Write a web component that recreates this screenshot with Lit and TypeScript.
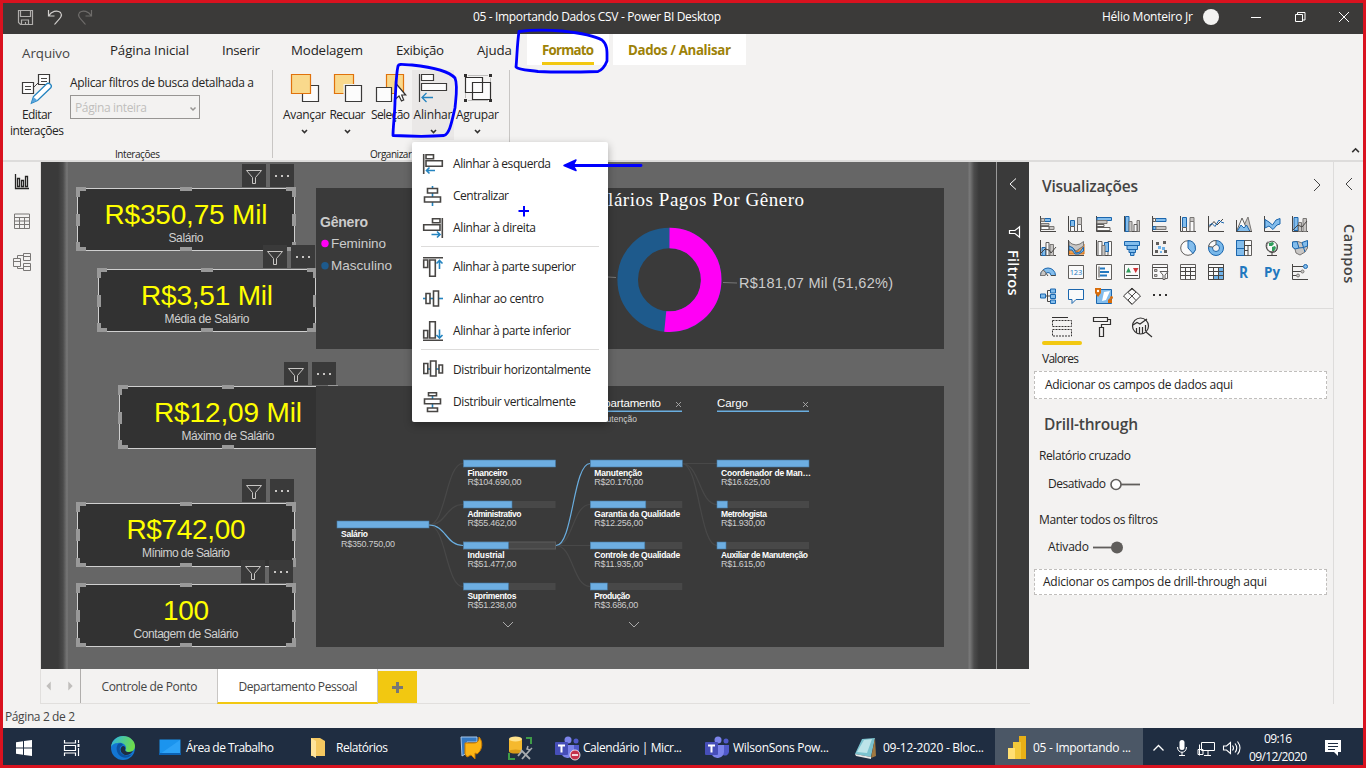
import { LitElement, html, svg, css, TemplateResult } from "lit";
import { customElement } from "lit/decorators.js";

interface Card { x: number; y: number; value: string; vw: number; label: string; lw: number; toolX: number; }
interface Node { x: number; y: number; fill: number; name: string; nw: number; value: string; w: number; active?: boolean; }

const cards: Card[] = [
  { x: 77, y: 188, value: "R$350,75 Mil", vw: 163, label: "Salário", lw: 35, toolX: 242 },
  { x: 98, y: 269, value: "R$3,51 Mil", vw: 132, label: "Média de Salário", lw: 85, toolX: 263 },
  { x: 119, y: 386, value: "R$12,09 Mil", vw: 148, label: "Máximo de Salário", lw: 93, toolX: 284 },
  { x: 77, y: 503, value: "R$742,00", vw: 119, label: "Mínimo de Salário", lw: 88, toolX: 242 },
  { x: 77, y: 584, value: "100", vw: 46, label: "Contagem de Salário", lw: 105, toolX: 241 },
];

const nodes: Node[] = [
  { x: 337, y: 521, fill: 92, name: "Salário", nw: 27, value: "R$350.750,00", w: 54 },
  { x: 463.5, y: 460, fill: 92, name: "Financeiro", nw: 40, value: "R$104.690,00", w: 54 },
  { x: 463.5, y: 501, fill: 48.5, name: "Administrativo", nw: 54, value: "R$55.462,00", w: 49 },
  { x: 463.5, y: 542, fill: 45, name: "Industrial", nw: 37, value: "R$51.477,00", w: 49, active: true },
  { x: 463.5, y: 583, fill: 45, name: "Suprimentos", nw: 49, value: "R$51.238,00", w: 49 },
  { x: 590.3, y: 460, fill: 92, name: "Manutenção", nw: 48, value: "R$20.170,00", w: 49 },
  { x: 590.3, y: 501, fill: 55.5, name: "Garantia da Qualidade", nw: 86, value: "R$12.256,00", w: 49 },
  { x: 590.3, y: 542, fill: 54.5, name: "Controle de Qualidade", nw: 86, value: "R$11.935,00", w: 49 },
  { x: 590.3, y: 583, fill: 17, name: "Produção", nw: 36, value: "R$3.686,00", w: 44 },
  { x: 717, y: 460, fill: 92, name: "Coordenador de Man…", nw: 90, value: "R$16.625,00", w: 49 },
  { x: 717, y: 501, fill: 10.5, name: "Metrologista", nw: 46, value: "R$1.930,00", w: 44 },
  { x: 717, y: 542, fill: 9, name: "Auxiliar de Manutenção", nw: 87, value: "R$1.615,00", w: 44 },
];

const axis = svg`<path class="d" d="M.5 0V15.5H16"/>`;
const vizIcons = [
  svg`${axis}<path class="b" d="M4.5 2.5h6v3h-6z"/><path class="g" d="M1 2.5h3.5v3H1zM1 7.5h8v2H1zM9 10.5h5v3H9z"/><path class="w" d="M1 10.5h8v3H1z"/>`,
  svg`${axis}<path class="b" d="M2.500 4.500h4v6h-4z"/><path class="w" d="M2.500 10.500h4v5h-4zM9.500 8.500h4v7h-4z"/><path class="g" d="M9.500 1.500h4v7h-4z"/>`,
  svg`${axis}<path class="b" d="M1 1.500h14.500v3H1z"/><path class="g" d="M1 4.500h10v3H1z"/><path class="w" d="M1 8.500h7v2H1zM1 11.500h13v3H1z"/>`,
  svg`${axis}<path class="b" d="M1.500 .5h3.500v15H1.500z"/><path class="g" d="M5 5.500h3v10H5zM13 4.500h2.500v11H13z"/><path class="w" d="M10 8.500h3v7h-3z"/>`,
  svg`${axis}<path class="b" d="M3.500 2.500h10.500v3H3.500zM1 10.500h3v3H1z"/><path class="g" d="M4 10.500h10v3H4z"/><path class="w" d="M1 2.500h2.500v3H1z"/>`,
  svg`${axis}<path class="b" d="M2.500 1.500h4v10h-4z"/><path class="w" d="M2.500 11.500h4v4h-4zM10 5.500h4v10h-4z"/><path class="g" d="M10 1.500h4v4h-4z"/>`,
  svg`${axis}<path class="d" d="M1 11.500 6 5.500 9 9l6-6"/><path class="l" d="M1 9.500l3-2 3 3L11 4l2 2 3 1"/>`,
  svg`<path class="g" d="M5 15.500 12 1l3.500 14.500z"/><path class="w" d="M.5 15.500 6 2l6 13.500z"/><path class="b" d="M1 15.500 5 9l3 3 2.500-3 3.500 6.500z"/><path class="d" d="M.5 4v11.500H16"/>`,
  svg`${axis}<path class="b" d="M1 3.500 5 6l3.500 3L12 4l4-1.500V8l-3 1-4 4.500L5 10l-4 2z"/>`,
  svg`${axis}<path class="b" d="M2 1.500h4v13H2z"/><path class="g" d="M6.500 6.500h3v9h-3zM11 2.500h3.500v13H11z"/><path class="d" d="M1 14l5-5 4 2 5-6"/>`,
  svg`${axis}<path class="b" d="M2 7.500h3.500v8H2z"/><path class="w" d="M6 2.500h3v13H6z"/><path class="g" d="M10 4.500h3.500v11H10z"/><path class="d" d="M1 13l4-4 4 1 2 3 5-6"/>`,
  svg`<path class="o" d="M1 9h4l4 3 3-5 4-3v10H1z"/><path class="g" d="M1 1.500 4 4l4 1 4-1 3.500-2.500V6L11 9 8 11 5 8 1 6z"/><path class="b" d="M1 6l4 2 3 5 4-1 3.500-5v4L11 14H7L4 10H1z"/>${axis}`,
  svg`${axis}<path class="w" d="M2 1.500h4v14H2zM12 1.500h3.500v14H12z"/><path class="b" d="M8.500 2.500h4v9h-4z"/><path class="g" d="M6 5.500h3v10H6z"/>`,
  svg`<path class="b" d="M.5 1.500h15v4H.5zM3 5.500h10.500v4H3zM5 9.500h6.500v3H5zM6.500 12.500H10v3H6.500z"/>`,
  svg`${axis}<path fill="#605e5c" d="M4 2h3v3H4zM11 1h3v3h-3zM3 10h3v3H3zM12 10h3v3h-3z"/><path fill="#6fb2e8" d="M6 6h3v3H6zM10 7h3v3h-3zM8 11h2v2H8z"/>`,
  svg`<circle cx="8" cy="8" r="7.300" class="w"/><path class="b" d="M8 .7A7.300 7.300 0 0 1 13 13.500L8 8z"/>`,
  svg`<circle cx="8" cy="8" r="5.500" fill="none" stroke="#78b8ea" stroke-width="4"/><circle cx="8" cy="8" r="7.500" class="l"/><circle cx="8" cy="8" r="3.500" class="l"/><path d="M.5 6.500 4.500 7 8 4.500V.5A8 8 0 0 0 .5 6.500z" class="w"/>`,
  svg`<path class="w" d="M.5.5h15v15H.5z"/><path class="b" d="M.5.5h8v8h-8zM.5 8.500h8v7h-8z"/><path class="d" d="M8.500.5v15M8.500 5.500h7M12 5.500v10M8.500 10.500H12"/>`,
  svg`<circle cx="8" cy="6.500" r="5.300" class="w"/><path fill="#2f9e5b" d="M5 3l4-1 1 2-2 2H5zM8 7l3-1 1 2-2 3H8z"/><path class="d" d="M4 1.500C0 5 3 12.500 8 12.500s6-4 5-8M8 12.500v2.500M3 15.500h10"/>`,
  svg`<path class="g" d="M.5 2 6 1.500l4 1.500 5.500-2V8L13 12l-5 3-4-2-1-4-2.500-2z"/><path class="b" d="M.5 2 5 1.500 7 8 3 9 .5 7zM10 2.500l5.500-2V6l-4 1.500z"/><path class="l" d="M7 8l4.500-.5L13 12"/>`,
  svg`<path class="b" d="M.5 11.500a7.500 7.500 0 0 1 15 0h-4.500a3 3 0 0 0-6 0z"/><path class="d" d="M8 12 4 6.500M.5 11.500H5M11 11.500h4.500"/><path class="g" d="M.5 11.500A8 8 0 0 1 3 6l3 3-1 2.500z"/>`,
  svg`<path class="w" d="M.5 1.500h15v13H.5z"/><text x="1.700" y="11" font-size="7.500" fill="#2278bf" textLength="12.500">123</text>`,
  svg`<path class="w" d="M.5.5h15v15H.5z"/><path stroke="#2278bf" stroke-width="2" d="M4 4.500h5M4 8h9M4 11.500h7"/><path class="d" d="M3 2.500v11"/>`,
  svg`<path class="w" d="M.5.500h15v14H.5z"/><path fill="#2f9e5b" d="M2 8.500l2.500-5 2.500 5z"/><path fill="#d13438" d="M9 4h5.500l-2.800 5z"/><path class="d" d="M2 11.500h12"/>`,
  svg`<path class="w" d="M.5.500h15v14H.5z"/><path class="d" d="M.5 3.500h15"/><path class="g" d="M2.500 5.500h2.500v2H2.500zM2.500 10.500h2.500v2H2.500z"/><path class="w" d="M8 7.500h8l-3 3.500v4.500h-2V11z"/>`,
  svg`<path class="w" d="M.5.500h15v15H.5z"/><path class="d" d="M.5 3.500h15M.5 7.500h15M.5 11.500h15M5.500 3.500v12M10.500 3.500v12"/>`,
  svg`<path class="w" d="M.5.500h15v15H.5z"/><path fill="#6fb2e8" d="M10 4h5.500v11.500H5V12h5z"/><path class="d" d="M.5.500h15v15H.5zM.5 3.500h15M.5 7.500h15M.5 11.500h15M5.500 3.500v12M10.500 3.500v12"/>`,
  svg`<text x="3" y="14" font-size="16" font-weight="700" fill="#2278bf" textLength="9" lengthAdjust="spacingAndGlyphs">R</text>`,
  svg`<text x="0" y="13" font-size="15" font-weight="700" fill="#2278bf" textLength="16" lengthAdjust="spacingAndGlyphs">Py</text>`,
  svg`${axis}<path class="d" d="M1 2.500h10M1 7.500h8M1 11.500h4"/><circle cx="13.500" cy="2.500" r="2" class="b"/><circle cx="10.500" cy="7.500" r="1.500" class="g"/><circle cx="6" cy="11.500" r="1.500" class="g"/>`,
  svg`<path class="d" d="M5 8h5.500M7.500 2.500h3M7.500 13.500h3M7.500 2.500v11"/><path class="b" d="M.5 6h5v4h-5zM10.500 1h5v4h-5zM10.500 6.500h5v4h-5zM10.500 12h5v3.500h-5z"/>`,
  svg`<path class="w blue" d="M.5 1.500h15v10H8l-4 4v-4H.5z"/>`,
  svg`<path class="b" d="M.5 1.500h15v14H.5z"/><path fill="#fff" d="M8 4l6-1-4 9-4 1z"/><path fill="#d86c0a" d="M-1 0h6v5L2 9-1 5zM12 12l2-2 2 2v3h-4z"/><circle cx="2" cy="3" r="1.200" fill="#fff"/><circle cx="15.500" cy="9.500" r="1.500" fill="#d86c0a"/>`,
  svg`<path class="w dark" d="M8 0 16.500 8 8 16.500-.5 8z"/><path class="d" d="M4 4.500 8 8l-4 4M8 8l4-4M8 8l4 4.500M4 4l5-3.500M8 1l4 3M4 12l4 4"/>`,
  svg`<path fill="#323130" d="M1 6h2v2H1zM7 6h2v2H7zM13 6h2v2h-2z"/>`,
];

// Align glyphs of the drop-down, drawn on a 20 by 20 grid.
const alignIcons = [
  svg`<path class="m" d="M.7 0v20M3 .7h7.500v4H3zM3 6.700h16.300v5.600H3z"/><path class="a" d="M4 16.500h8M6.500 13.500l-3 3 3 3"/>`,
  svg`<path class="a" d="M9.500 0v20"/><path class="mf" d="M4.500 2.500h10v4.500h-10zM1.500 11h16v5h-16z"/>`,
  svg`<path class="m" d="M19.300 0v20M9.500.7h7.500v4H9.500zM.7 6.700h16.300v5.600H.7z"/><path class="a" d="M8.500 16.500h8M14 13.500l3 3-3 3"/>`,
  svg`<path class="m" d="M0 .7h20M.7 3h4v7.500h-4zM6.700 3h5.600v16.300H6.700z"/><path class="a" d="M16.500 4v8M13.500 6.500l3-3 3 3"/>`,
  svg`<path class="a" d="M0 9.500h20"/><path class="mf" d="M3 4.500h4v10H3zM10.500 2h5v15h-5z"/>`,
  svg`<path class="m" d="M0 19.300h20M.7 9.500h4v7.500h-4zM6.700.7h5.600v16.300H6.700z"/><path class="a" d="M16.500 8.500v8M13.500 14l3 3 3-3"/>`,
  svg`<path class="a" d="M3 9h14"/><path class="mf" d="M.8 3.500h4v10h-4zM7.500 1h5.500v15H7.500zM16 5h3.500v8H16z"/>`,
  svg`<path class="a" d="M9.500 3v14"/><path class="mf" d="M5.500.8h8v3h-8zM1.500 7h16v4.800h-16zM4.500 16h10v3.500h-10z"/>`,
];

const ribbonButtons: { label: string; w: number; text: number; x: number; on?: boolean; arrow: boolean; icon: TemplateResult }[] = [
  { label: "Avançar", w: 43, text: 43, x: 283, arrow: true, icon: svg`<path class="k" d="M302.500 85.500h16v16h-16z"/><path class="or" d="M291.500 74.500h19v19h-19z"/>` },
  { label: "Recuar", w: 43, text: 36, x: 326, arrow: true, icon: svg`<path class="or" d="M334.500 74.500h19v19h-19z"/><path d="M343.500 84h11v11h-11z" fill="#f3f2f1"/><path class="k" d="M345.500 85.500h16v16h-16z"/>` },
  { label: "Seleção", w: 43, text: 39, x: 369, arrow: false, icon: svg`<path class="or" d="M386.500 74.500h17v19h-17z"/><path class="k" d="M376.500 87.500h15v14h-15z"/><path fill="#fff" stroke="#323130" stroke-width="1.200" d="M395.500 83v16l3.500-3 2.500 5 2.200-1-2-5h4z"/>` },
  { label: "Alinhar", w: 42, text: 39, x: 412, on: true, arrow: true, icon: svg`<path class="k" d="M419.500 74v28M421.500 74.500h12v6h-12zM421.500 83.500h25v7h-25z"/><path fill="none" stroke="#2484c0" stroke-width="1.300" d="M422 97.500h11M426.500 93l-4.500 4.500 4.500 4.500"/>` },
  { label: "Agrupar", w: 47, text: 43, x: 454, arrow: true, icon: svg`<path class="d" d="M468 75.500h20M468 100.500h20M465.500 78v20M490.500 78v20" stroke-opacity=".3"/><path fill="#fcfcfc" d="M466 78h17v15h-17zM472 82h18v18h-18z"/><path class="d dark" stroke-width="1.200" d="M465.500 77.500h17v15h-17zM472.500 82.500h18v17h-18z"/><path fill="#323130" d="M464 74h3v3h-3zM489 74h3v3h-3zM464 99h3v3h-3zM489 99h3v3h-3z"/>` },
];

@customElement("app-root")
export class AppRoot extends LitElement {
  static styles = css`
    :host { display: block; width: 1366px; height: 768px; overflow: hidden; font-family: "Open Sans", "Noto Sans", sans-serif; font-size: 12px; color: #252423; }
    * { box-sizing: border-box; }
    svg { display: block; flex: none; overflow: visible; }
    .frame { position: relative; display: flex; flex-direction: column; width: 1366px; height: 768px; border: 3px solid #d9121f; background: #f3f2f1; }
    .t { display: inline-block; white-space: nowrap; flex: none; line-height: 16px; }
    .titlebar { display: flex; align-items: center; height: 31px; background: #3b3a39; color: #fff; padding: 0 0 3px 15px; flex: none; }
    .titlebar .name { margin-left: 380px; }
    .titlebar .user { margin-left: 381px; }
    .titlebar .win { margin-left: 10px; }
    .ribbon { height: 128px; border-bottom: 2px solid #dddcdb; flex: none; display: flex; flex-direction: column; }
    .tabs { display: flex; height: 32px; font-size: 13.300px; flex: none; }
    .tab { padding-top: 8px; flex: none; display: flex; flex-direction: column; }
    .tab.file { padding: 11px 0 0 19px; color: #444; margin-right: 40px; }
    .tab.hot { height: 31px; background: #fff; color: #9d8208; font-weight: 700; padding-left: 15px; padding-right: 15px; }
    .tab .under { display: block; height: 3px; background: #f2c811; margin-top: 4px; }
    .groups { display: flex; flex: 1; }
    .group { display: flex; flex-direction: column; align-items: center; height: 94px; }
    .group .body { display: flex; height: 82px; flex: none; }
    .group .caption { font-size: 10px; line-height: 12px; }
    .g1 { width: 269px; }
    .g1 .body { align-self: flex-start; }
    .rule { width: 1px; background: #c8c6c4; margin: 4px 0 2px; }
    .edit { width: 68px; display: flex; flex-direction: column; align-items: center; padding-top: 8px; margin-right: -1px; }
    .edit svg { margin-bottom: 3px; }
    .drill { padding-top: 9px; display: flex; flex-direction: column; gap: 4px; }
    .select { width: 130px; height: 24px; border: 1px solid #979593; display: flex; align-items: center; justify-content: space-between; padding: 1px 2px 0 4px; color: #c0bebc; }
    .g2 { width: 236px; }
    .g2 .body { align-self: flex-start; padding: 4px 0 0 10px; }
    .rbtn { display: flex; flex-direction: column; align-items: center; padding-top: 4px; height: 70px; }
    .rbtn svg { margin-bottom: 3px; }
    .rbtn.on { background: #eae8e7; }
    .collapse { margin-left: auto; align-self: flex-end; padding: 0 2px 0 0; margin-bottom: 3px; }
    .main { display: flex; height: 542px; flex: none; }
    .rail { width: 38px; border-right: 1px solid #e1dfdd; display: flex; flex-direction: column; align-items: center; padding-top: 12px; gap: 23px; }
    .work { width: 989px; display: flex; flex-direction: column; }
    .top { display: flex; height: 507px; }
    .canvas { position: relative; width: 955px; height: 507px; overflow: hidden; background: linear-gradient(90deg, #3a3a3a 0, #3a3a3a 17px, #4a4a4a 22px, #777 26px, #666 27.500px, #666 927px, #777 928px, #777 929px, #4c4c4c 933px, #3a3a3a 938px); }
    .card { position: absolute; width: 218px; height: 64px; background: #323232; border: 1px solid #d0d0d0; display: flex; flex-direction: column; align-items: center; padding-top: 10px; font-family: "Liberation Sans", sans-serif; }
    .card .value { font-size: 28px; line-height: 32px; color: #ff0; }
    .card .label { font-size: 12px; line-height: 15px; color: #d0d0d0; }
    .card svg, .tools, .panel, .menu, .marks { position: absolute; }
    .card svg { left: -2px; top: -2px; }
    .tools { display: flex; gap: 4px; }
    .tools svg { background: #3a3a3a; }
    .panel { background: #3a3a3a; font-family: "Liberation Sans", sans-serif; }
    .filters { width: 33px; background: #3a3a3a; border-left: 1px solid #999; color: #fff; display: flex; flex-direction: column; align-items: center; padding-top: 16px; }
    .filters .funnel { margin: 36px 0 0 3px; }
    .filters .vert { margin-top: 12px; font-size: 14.500px; font-weight: 600; letter-spacing: .3px; }
    .vert { writing-mode: vertical-rl; line-height: 18px; white-space: nowrap; }
    .pages { display: flex; height: 35px; width: 989px; color: #444; padding-left: 0; border-bottom: 1px solid #e1dfdd; }
    .arrows { width: 40px; border-right: 1px solid #b0aeac; }
    .page { height: 35px; display: flex; align-items: center; justify-content: center; width: 136px; padding-left: 1px; }
    .page.on { width: 161px; background: #fff; border-left: 1px solid #c8c6c4; border-right: 1px solid #c8c6c4; border-bottom: 2px solid #f2c811; padding-top: 2px; }
    .add { width: 39px; height: 32px; margin-top: 2px; background: #f2c811; }
    .viz { width: 303px; background: #f3f2f1; display: flex; flex-direction: column; }
    .head { display: flex; justify-content: space-between; padding: 14px 11px 0 12px; font-size: 15.500px; font-weight: 600; color: #444; height: 54px; align-items: flex-start; }
    .head .t { line-height: 21px; }
    .grid { display: grid; grid-template-columns: repeat(10, 16px); column-gap: 12px; row-gap: 8px; padding-left: 10px; height: 93px; border-bottom: 1px solid #dddcdb; align-content: start; }
    .modes { display: flex; padding: 7px 0 0 12px; height: 31px; gap: 10px; }
    .bar { width: 40px; height: 4px; border-radius: 2px; background: #f2c811; margin: 1px 0 0 12px; }
    .field { margin: 5px 0 0 12px; height: 16px; }
    .drop { margin: 5px 6px 0 4px; height: 28px; background: #fff; border: 1px dashed #c0bebc; display: flex; align-items: center; padding-left: 10px; }
    .sect { margin: 14px 0 0 14px; font-size: 15.500px; font-weight: 600; color: #444; height: 21px; }
    .sect .t { line-height: 21px; }
    .sub { margin: 13px 0 0 9px; height: 16px; }
    .toggle { display: flex; align-items: center; gap: 4px; margin: 13px 0 0 18px; height: 16px; }
    .toggle.later { margin-top: 12px; }
    .sub.second { margin-top: 19px; }
    .drop.small { height: 26px; margin-top: 14px; padding-left: 8px; }
    .fields { width: 30px; border-left: 1px solid #dddcdb; display: flex; flex-direction: column; align-items: center; padding-top: 16px; color: #333; }
    .fields .vert { margin: 34px 0 0 1px; font-size: 14.500px; font-weight: 600; color: #444; letter-spacing: .6px; }
    .status { height: 24px; flex: none; padding: 4px 0 0 2px; color: #444; }
    .taskbar { height: 37px; flex: none; background: #1f2d41; color: #fff; display: flex; align-items: center; padding: 2px 0 0 13px; }
    .task { display: flex; align-items: center; gap: 5px; flex: none; }
    .task.on { height: 37px; width: 148px; margin: -2px 0 0 11px; padding: 2px 0 0 13px; background: #4b5766; gap: 7px; }
    .clock { display: flex; flex-direction: column; align-items: center; width: 60px; margin-left: 7px; }
    .clock .t { line-height: 18px; }
    .menu { left: 409px; top: 139px; width: 196px; height: 280px; background: #fff; border-radius: 2px; box-shadow: 0 3px 8px rgba(0,0,0,.3); padding-top: 6px; }
    .item { height: 32px; display: flex; align-items: center; padding-left: 11px; gap: 10px; }
    .sep { height: 1px; background: #dddcdb; margin: 2px 9px 4px; }
    .marks { left: -3px; top: -3px; pointer-events: none; }
    .d { fill: none; stroke: #484644; }
    .w { fill: #fafafa; stroke: #605e5c; }
    .w.blue { stroke: #1b66ad; }
    .dark { stroke: #323130; }
    .g { fill: #c8c6c4; stroke: #797775; }
    .b { fill: #83bdec; stroke: #1b66ad; }
    .o { fill: #f0a050; stroke: #d86c0a; }
    .l { fill: none; stroke: #1b66ad; }
    .k { fill: #fcfcfc; stroke: #3b3a39; stroke-width: 1.200; }
    .or { fill: #f9d98c; stroke: #e0720c; stroke-width: 1.200; }
    .m { fill: none; stroke: #484644; stroke-width: 1.600; }
    .mf { fill: #fff; stroke: #484644; stroke-width: 1.600; }
    .a { fill: none; stroke: #2484c0; stroke-width: 1.600; }
    .z { fill: none; stroke: #c8c6c4; }
  `;

  // Spread each measured label over the width that its slot reserves.
  protected firstUpdated() {
    this.renderRoot.querySelectorAll<HTMLElement>(".t").forEach((el) => {
      const range = document.createRange();
      range.selectNodeContents(el);
      const natural = range.getBoundingClientRect().width;
      const count = (el.textContent ?? "").length;
      if (count > 1) el.style.letterSpacing = `${(parseFloat(el.style.width) - natural) / (count - 1)}px`;
    });
  }

  private t(text: string, width: number, cls = "") {
    return html`<span class="t ${cls}" style="width:${width}px">${text}</span>`;
  }

  private card(c: Card) {
    const h = c.y === 503 ? 64 : 63;
    return html`
      <div class="card" style="left:${c.x - 41}px;top:${c.y - 162}px;height:${h}px">
        ${this.t(c.value, c.vw, "value")}${this.t(c.label, c.lw, "label")}
        <svg width="220" height="66"><path fill="#999" d="M0 0h10v4H4v6H0zM210 0h10v10h-4V4h-6zM0 ${h + 1}v-9h4v5h6v4zM220 ${h + 1}v-9h-4v5h-6v4zM104 0h12v4h-12zM104 ${h - 3}h12v4h-12zM0 27h4v12H0zM216 27h4v12h-4z"/></svg>
      </div>
      <div class="tools" style="left:${c.toolX - 41}px;top:${c.y - 186}px">
        <svg width="24" height="23"><path class="z" d="M4.500 6.500h15l-6 7v6h-3v-6z"/></svg>
        <svg width="24" height="23"><path fill="#c8c6c4" d="M5 11h2v2H5zM11 11h2v2h-2zM17 11h2v2h-2z"/></svg>
      </div>`;
  }

  private tree() {
    const link = (x1: number, y1: number, x2: number, y2: number, on = false) => {
      const m = (x1 + x2) / 2;
      return svg`<path d="M${x1} ${y1}C${m} ${y1} ${m} ${y2} ${x2} ${y2}" fill="none" stroke="${on ? "#6aaee0" : "#484848"}" stroke-width="1.200"/>`;
    };
    return html`<svg width="628" height="261" viewBox="316 386 628 261">
      ${[463.5, 504.5, 586.5].map((y) => link(429, 525, 463, y))}
      ${[504.5, 545.5, 586.5].map((y) => link(556, 545.5, 590, y))}
      ${[463.5, 504.5, 545.5].map((y) => link(682, 463.5, 717, y))}
      ${link(429, 525, 463, 545.5, true)}${link(556, 545.5, 590, 463.5, true)}
      ${nodes.map((n) => svg`
        <rect x="${n.x}" y="${n.y}" width="92" height="7" fill="#484848" stroke="${n.active ? "#5c5c5c" : "none"}"/>
        <rect x="${n.x}" y="${n.y}" width="${n.fill}" height="7" fill="#6daee2" stroke="#467ba5" stroke-width=".6"/>
        <text x="${n.x + 4}" y="${n.y + (n.x === 337 ? 16 : 15.5)}" font-size="8.500" font-weight="700" fill="#fff" textLength="${n.nw}">${n.name}</text>
        <text x="${n.x + 4}" y="${n.y + (n.x === 337 ? 26 : 25)}" font-size="9" fill="#ccc" textLength="${n.w}">${n.value}</text>`)}
      <text x="590" y="407" font-size="11.500" fill="#fff" textLength="71">Departamento</text>
      <text x="717" y="407" font-size="11.500" fill="#fff" textLength="31">Cargo</text>
      <text x="590" y="422" font-size="8.500" fill="#d0d0d0" textLength="47">Manutenção</text>
      <path stroke="#6aaee0" stroke-width="1.500" d="M590 411.300h92M717 411.300h92"/>
      <path fill="none" stroke="#aaa" stroke-width=".9" d="M676 402l5 5M681 402l-5 5M803 402l5 5M808 402l-5 5"/>
      <path fill="none" stroke="#aaa" d="M503 622l5 5 5-5M629 622l5 5 5-5"/>
    </svg>`;
  }

  private donut() {
    return html`<svg width="628" height="161" viewBox="316 188 628 161">
      <text x="320" y="227" font-size="14" font-weight="700" fill="#ccc" textLength="48">Gênero</text>
      <circle cx="325" cy="243.500" r="3.700" fill="#ff00f5"/><circle cx="325" cy="265.800" r="3.700" fill="#1e5a8c"/>
      <text x="331" y="248" font-size="13.500" fill="#ccc" textLength="55">Feminino</text>
      <text x="331" y="270" font-size="13.500" fill="#ccc" textLength="61">Masculino</text>
      <text x="588" y="206" font-family="Liberation Serif, serif" font-size="19" fill="#fff" textLength="216">Salários Pagos Por Gênero</text>
      <path d="M608 277l8 .5M723 282.500l14 .5" stroke="#777" fill="none"/>
      <circle cx="669.500" cy="279.800" r="41.800" fill="none" stroke="#1e5a8c" stroke-width="20.600"/>
      <path d="M669.500 238a41.800 41.800 0 1 1-4.250 83.400" fill="none" stroke="#ff00f5" stroke-width="20.600"/>
      <text x="739" y="288" font-size="14.500" fill="#ccc" textLength="154">R$181,07 Mil (51,62%)</text>
    </svg>`;
  }

  private teams(busy: boolean) {
    return html`<svg width="25" height="24" viewBox="0 0 25 24">
      <circle cx="13" cy="4" r="3.500" fill="#7b83eb"/><circle cx="21" cy="5" r="2.500" fill="#5059c9"/>
      <path fill="#5059c9" d="M17 9h7v7a4 4 0 0 1-6 3z"/><path fill="#7b83eb" d="M7 9h12v7a6.500 6.500 0 0 1-12 3z"/>
      <rect y="6" width="13" height="13" rx="1" fill="#464eb8"/><path stroke="#fff" stroke-width="2" d="M3 9.500h7M6.500 9.500v7"/>
      ${busy ? svg`<circle cx="20" cy="19" r="5" fill="#c4314b" stroke="#fff" stroke-width=".8"/><path stroke="#fff" stroke-width="1.600" d="M17 19h6"/>` : ""}
    </svg>`;
  }

  render() {
    const items: [string, number][] = [["Alinhar à esquerda", 98], ["Centralizar", 56], ["Alinhar à direita", 83], ["Alinhar à parte superior", 123], ["Alinhar ao centro", 91], ["Alinhar à parte inferior", 118], ["Distribuir horizontalmente", 138], ["Distribuir verticalmente", 123]];
    const tabs: [string, number, number][] = [["Página Inicial", 79, 33], ["Inserir", 38, 31], ["Modelagem", 72, 33], ["Exibição", 48, 33], ["Ajuda", 35, 15]];
    return html`<div class="frame">
      <div class="titlebar">
        <svg width="75" height="16" viewBox="18 9 75 16">
          <path fill="none" stroke="#b0aeac" stroke-width="1.200" d="M18.500 10.500h14v14h-12l-2-2zM20.500 10.500v6h10v-6M21.500 24v-4h7v4M25.500 24v-2"/>
          <path fill="none" stroke="#d0cecc" stroke-width="1.200" d="M48.500 10v6h6M49 15.500c2-4 8-6 11.500-3 3 4-2 7-6 12"/>
          <path fill="none" stroke="#6e6c6a" stroke-width="1.200" d="M91.500 10v6h-6M91 15.500c-2-4-8-6-11.500-3-3 4 2 7 6 12"/>
        </svg>
        ${this.t("05 - Importando Dados CSV - Power BI Desktop", 248, "name")}
        ${this.t("Hélio Monteiro Jr", 91, "user")}
        <svg class="win" width="148" height="16" viewBox="1203 9 148 16"><circle cx="1211" cy="17" r="8" fill="#f3f2f1"/><path fill="none" stroke="#fff" d="M1251 17.500h10M1295.500 14.500h7v7h-7zM1297.500 14v-1.500h7.500v7.500h-2M1339 12l10 10M1349 12l-10 10"/></svg>
      </div>
      <div class="ribbon">
        <div class="tabs">
          <div class="tab file">${this.t("Arquivo", 48)}</div>
          ${tabs.map(([s, w, gap]) => html`<div class="tab" style="margin-right:${gap}px">${this.t(s, w)}</div>`)}
          <div class="tab hot" style="margin-right:4px">${this.t("Formato", 52)}<span class="under"></span></div>
          <div class="tab hot">${this.t("Dados / Analisar", 103)}</div>
        </div>
        <div class="groups">
          <div class="group g1">
            <div class="body">
              <div class="edit">
                <svg width="30" height="30" viewBox="23 74 30 30"><path class="k" d="M39.500 74.500h11v10h-11zM23.500 82.500h11v11h-11z"/><path class="d" d="M42 78.500h6M42 81.500h6M26 86.500h6M26 89.500h6M35 87l5-5"/><path fill="#fff" stroke="#2484c0" stroke-width="1.300" d="M32.500 103l2-6.500 13-12.500c2-2 6 1 4.500 3.500L38.500 100.500z"/><path fill="#5aa5dd" d="M32.500 103l2-6 4 3.500z"/></svg>
                ${this.t("Editar", 30)}${this.t("interações", 54)}
              </div>
              <div class="drill">${this.t("Aplicar filtros de busca detalhada a", 184)}
                <div class="select">${this.t("Página inteira", 72)}<svg width="8" height="6"><path d="M1.500 2.500 4 5l2.500-2.500" fill="none" stroke="#979593" stroke-width="1.500"/></svg></div>
              </div>
            </div>
            ${this.t("Interações", 45, "caption")}
          </div>
          <div class="rule"></div>
          <div class="group g2">
            <div class="body">
              ${ribbonButtons.map((b) => html`<div class="rbtn ${b.on ? "on" : ""}" style="width:${b.w}px">
                <svg width="${b.w}" height="30" viewBox="${b.x} 74 ${b.w} 30">${b.icon}</svg>
                ${this.t(b.label, b.text)}
                ${b.arrow ? html`<svg width="7" height="16"><path d="M1 7l2.500 2.500L6 7" fill="none" stroke="#323130" stroke-width="1.600"/></svg>` : ""}
              </div>`)}
            </div>
            ${this.t("Organizar", 42, "caption")}
          </div>
          <div class="rule"></div>
          <svg class="collapse" width="12" height="14" viewBox="0 0 12 14"><path d="M1.500 9.500l4-4 4 4" fill="none" stroke="#323130" stroke-width="1.900"/></svg>
        </div>
      </div>
      <div class="main">
        <div class="rail">
          <svg width="16" height="17" viewBox="13 174 16 17"><path fill="none" stroke="#252423" stroke-width="1.300" d="M14.500 174v14.500H28M16.500 178.500h2v8h-2zM20.500 180.500h2v6h-2zM24.500 176.500h2v10h-2z"/></svg>
          <svg width="16" height="16"><path fill="none" stroke="#797775" d="M.5 0h15v14.500H.5zM.5 3.500h15M.5 7h15M.5 10.500h15M5.500 3.500v11M10.500 3.500v11"/></svg>
          <svg width="18" height="18"><path fill="none" stroke="#797775" d="M.5 5.500h7v8h-7zM.5 8.500h7M10.500.5h7v7h-7zM10.500 3.500h7M10.500 10.500h7v7h-7zM10.500 13.500h7M4.500 5V2.500h6M4.500 14v1.500h6"/></svg>
        </div>
        <div class="work">
          <div class="top">
            <div class="canvas">
              ${cards.map((c) => this.card(c))}
              <div class="panel" style="left:275px;top:26px">${this.donut()}</div>
              <div class="panel" style="left:275px;top:224px">${this.tree()}</div>
            </div>
            <div class="filters">
              <svg width="10" height="12"><path fill="none" stroke="#fff" d="M8 .5 2 6l6 5.500"/></svg>
              <svg class="funnel" width="12" height="12"><path fill="none" stroke="#fff" stroke-width="1.200" d="M10.500.8v10.400L6 7.500H.5v-3H6z"/></svg>
              <span class="vert">Filtros</span>
            </div>
          </div>
          <div class="pages">
            <svg class="arrows" width="40" height="34" viewBox="41 669 40 34"><path fill="#c0bebc" d="M51 681.500v9l-4.500-4.500zM69 681.500v9l4.500-4.500z"/></svg>
            <div class="page">${this.t("Controle de Ponto", 96)}</div>
            <div class="page on">${this.t("Departamento Pessoal", 119)}</div>
            <svg class="add" width="39" height="32"><path stroke="#797775" stroke-width="3" d="M14 16.500h11M19.500 11v11"/></svg>
          </div>
        </div>
        <div class="viz">
          <div class="head">${this.t("Visualizações", 96)}<svg width="10" height="14"><path fill="none" stroke="#444" d="M2 3l6 6-6 6"/></svg></div>
          <div class="grid">${vizIcons.map((i) => html`<svg width="16" height="16">${i}</svg>`)}</div>
          <div class="modes">
            <svg width="100" height="22" viewBox="1042 316 100 22">
              <path d="M1052 317.500h16" stroke="#323130"/><path fill="none" stroke="#323130" stroke-dasharray="2 1" d="M1052.500 320.500h19v6h-19zM1052.500 329.500h19v6.500h-19z"/>
              <path fill="none" stroke="#323130" stroke-width="1.200" d="M1093.500 317.500h14v4h-14zM1107.500 319.500h3v5h-9v3M1099.500 327.500h4v9h-4z"/>
              <g fill="none" stroke="#323130" stroke-width="1.200"><circle cx="1140.500" cy="326" r="8"/><path d="M1146 332l6 5M1133 325l4-2.500 3 1.500 7-5M1136.500 333v-5M1139.500 334v-7M1142.500 334v-7M1145.500 331v-6"/></g>
            </svg>
          </div>
          <div class="bar"></div>
          <div class="field">${this.t("Valores", 37)}</div>
          <div class="drop">${this.t("Adicionar os campos de dados aqui", 188)}</div>
          <div class="sect">${this.t("Drill-through", 94)}</div>
          <div class="sub">${this.t("Relatório cruzado", 92)}</div>
          <div class="toggle">${this.t("Desativado", 58)}<svg width="30" height="12"><path d="M11 6.500h19" stroke="#605e5c" stroke-width="1.800"/><circle cx="6" cy="6.500" r="5" fill="#fff" stroke="#605e5c" stroke-width="1.600"/></svg></div>
          <div class="sub second">${this.t("Manter todos os filtros", 119)}</div>
          <div class="toggle later">${this.t("Ativado", 41)}<svg width="30" height="12"><path d="M0 6.500h20" stroke="#605e5c" stroke-width="1.800"/><circle cx="24" cy="6.500" r="6" fill="#605e5c"/></svg></div>
          <div class="drop small">${this.t("Adicionar os campos de drill-through aqui", 224)}</div>
        </div>
        <div class="fields">
          <svg width="10" height="12"><path fill="none" stroke="#444" d="M8 0 2 6l6 6"/></svg>
          <span class="vert">Campos</span>
        </div>
      </div>
      <div class="status">${this.t("Página 2 de 2", 70)}</div>
      <div class="taskbar">
        <svg width="16" height="16"><path fill="#fff" d="M0 2.200 7 1.200V7.500H0zM8 1l8-1v7.500H8zM0 8.500h7v6.300l-7-1zM8 8.500h8V16l-8-1z"/></svg>
        <svg style="margin-left:32px" width="16" height="16"><path fill="none" stroke="#fff" stroke-width="1.200" d="M.5 0v3h11V0M.5 16v-3h11v3M.5 5.500h11v5H.5zM14.500 0v3M14.500 8v8"/><path fill="#fff" d="M13.500 4h2v3h-2z"/></svg>
        <svg style="margin-left:31px" width="24" height="24"><defs><linearGradient id="e" x2="1" y2=".3"><stop stop-color="#2bb4e8"/><stop offset="1" stop-color="#6ddc4c"/></linearGradient></defs><circle cx="12" cy="12" r="12" fill="#1376d3"/><path fill="url(#e)" d="M0 11C1 4 6 0 12 0c7 0 12 5 12 10 0 4-3 6-6 6s-4-1-3-3c1-4-4-7-8-6-4 0-6 2-7 4z"/><path fill="#1f2d41" d="M12 10c2 0 3 2 2 4 0 2 4 3 8 1-3 5-9 5-11 2-2-2-2-6 1-7z"/><path fill="#0c52a0" d="M7 8c-3 4-1 11 4 13 4 2 8 0 10-3-5 3-11 1-12-3-1-3 0-5 3-6-1-2-3-2-5-1z"/></svg>
        <div class="task" style="margin-left:24px"><svg width="22" height="17"><path fill="#1b94ee" d="M.5.500h21v15H.5z"/><path fill="#3fb0ff" d="M1 15 21 1v14z" opacity=".5"/><path fill="#0b62b5" d="M0 14h22v2H0z"/></svg>${this.t("Área de Trabalho", 88)}</div>
        <div class="task" style="margin-left:37px;gap:10px"><svg width="15" height="20"><path fill="#f5c860" d="M0 0h9l5 3v15H0z"/><path fill="#ffe39a" d="M0 0l5 3v17l-5-3z"/></svg>${this.t("Relatórios", 52)}</div>
        <svg style="margin-left:72px" width="24" height="24"><path fill="#3579c2" stroke="#a8c8ec" d="M1 1h16v5H7v11l-5 3z"/><path fill="#fdb515" stroke="#c87800" d="M5 7h9c4 0 5-3 5-6 4 4 4 13-2 17l-2-1v6l-4-4-4 2-2-3z"/></svg>
        <svg style="margin-left:24px" width="24" height="24"><path fill="#f5b92e" d="M1 3h13v13H1z"/><ellipse cx="7.500" cy="15.500" rx="6.500" ry="2" fill="#d99a18"/><ellipse cx="7.500" cy="3" rx="6.500" ry="2.500" fill="#ffe28b"/><path fill="none" stroke="#3f9b48" stroke-width="2" d="M18 2h5v6M1 17v6h6"/><path stroke="#a8acb0" stroke-width="1.800" d="M10 20l4-5M14 23l8-9M13 14l9 9"/><path fill="none" stroke="#a8acb0" stroke-width="1.500" d="M20 10l-1 3 3 1 2-2"/></svg>
        <div class="task" style="margin-left:23px;gap:3px">${this.teams(true)}${this.t("Calendário | Micr...", 99)}</div>
        <div class="task" style="margin-left:23px;gap:3px">${this.teams(false)}${this.t("WilsonSons Pow...", 96)}</div>
        <div class="task" style="margin-left:26px;gap:6px"><svg width="22" height="22"><path fill="#7cc3cf" d="M7 2l13-1-4 19-16-3z"/><path fill="#d9f2f4" d="M9 3l8-1-5 14-10-1z" opacity=".7"/><path fill="#a07840" d="M20 1l1 18-5 2z"/><path fill="#e8e8e8" d="M0 17l16 3v2L1 19z"/></svg>${this.t("09-12-2020 - Bloc...", 101)}</div>
        <div class="task on"><svg width="18" height="23"><path fill="#e8b016" d="M11 0h7v23h-7z"/><path fill="#f2c83a" d="M5 6h8v17H5z"/><path fill="#ffdf72" d="M0 12h7v11H0z"/></svg>${this.t("05 - Importando ...", 98)}</div>
        <svg style="margin-left:10px" width="88" height="18" viewBox="1153 739 88 18"><path fill="none" stroke="#fff" stroke-width="1.300" d="M1153.500 750.500l5-5 5 5"/><rect x="1179.500" y="740" width="5" height="10" rx="2.500" fill="#fff"/><path fill="none" stroke="#fff" d="M1177.500 747c0 7 9 7 9 0M1182 752v4M1179 755.500h6M1201.500 742.500h13v8h-13zM1208 751v4M1204 755.500h7M1199.500 744.500v11M1198 749.500h5v5h-5z"/><path fill="none" stroke="#fff" stroke-width="1.100" d="M1223.500 746h3l4-3.500v11l-4-3.500h-3zM1232.500 745.500q2 2.500 0 5M1235 743.500q3.500 4.500 0 9M1237.500 741.500q5 6.500 0 13"/></svg>
        <div class="clock">${this.t("09:16", 28)}${this.t("09/12/2020", 58)}</div>
        <svg style="margin-left:17px" width="17" height="17"><path fill="#fff" d="M0 1h16v12h-3v4l-4-4H0z"/><path stroke="#1f2d41" d="M3 4.500h10M3 7.500h10M3 10.500h7"/></svg>
      </div>
      <div class="menu">
        ${items.map(([s, w], i) => html`${i === 3 || i === 6 ? html`<div class="sep"></div>` : ""}<div class="item"><svg width="20" height="20">${alignIcons[i]}</svg>${this.t(s, w)}</div>`)}
      </div>
      <svg class="marks" width="1366" height="768" viewBox="0 0 1366 768" fill="none" stroke="#00f" stroke-width="2.800" stroke-linecap="round" stroke-linejoin="round">
        <path d="M519 31.500C530 30 550 30 562 31C580 33 595 36 602 40C608 45 607 52 607 61C605 66 602 70 598 71.500C580 72 550 72 538 71.500C528 70 519 70 516 67C517 58 517 45 519 31.500z"/>
        <path d="M398 66C399 63 404 65 412 65C430 67 448 70 455 78C458 85 456 97 455 108C452 120 450 134 444 135.500C425 137 403 136 393 135.500C393 127 395 112 395 101C396 88 396 75 398 66z"/>
        <path d="M641 165.500H567"/><path fill="#00f" stroke-width="1.500" d="M564 165.500l12-5.500-3 5.500 3 5z"/><path stroke-width="2" stroke-linecap="butt" d="M518.500 211h10.500M524 206v10.500"/>
      </svg>
    </div>`;
  }
}
